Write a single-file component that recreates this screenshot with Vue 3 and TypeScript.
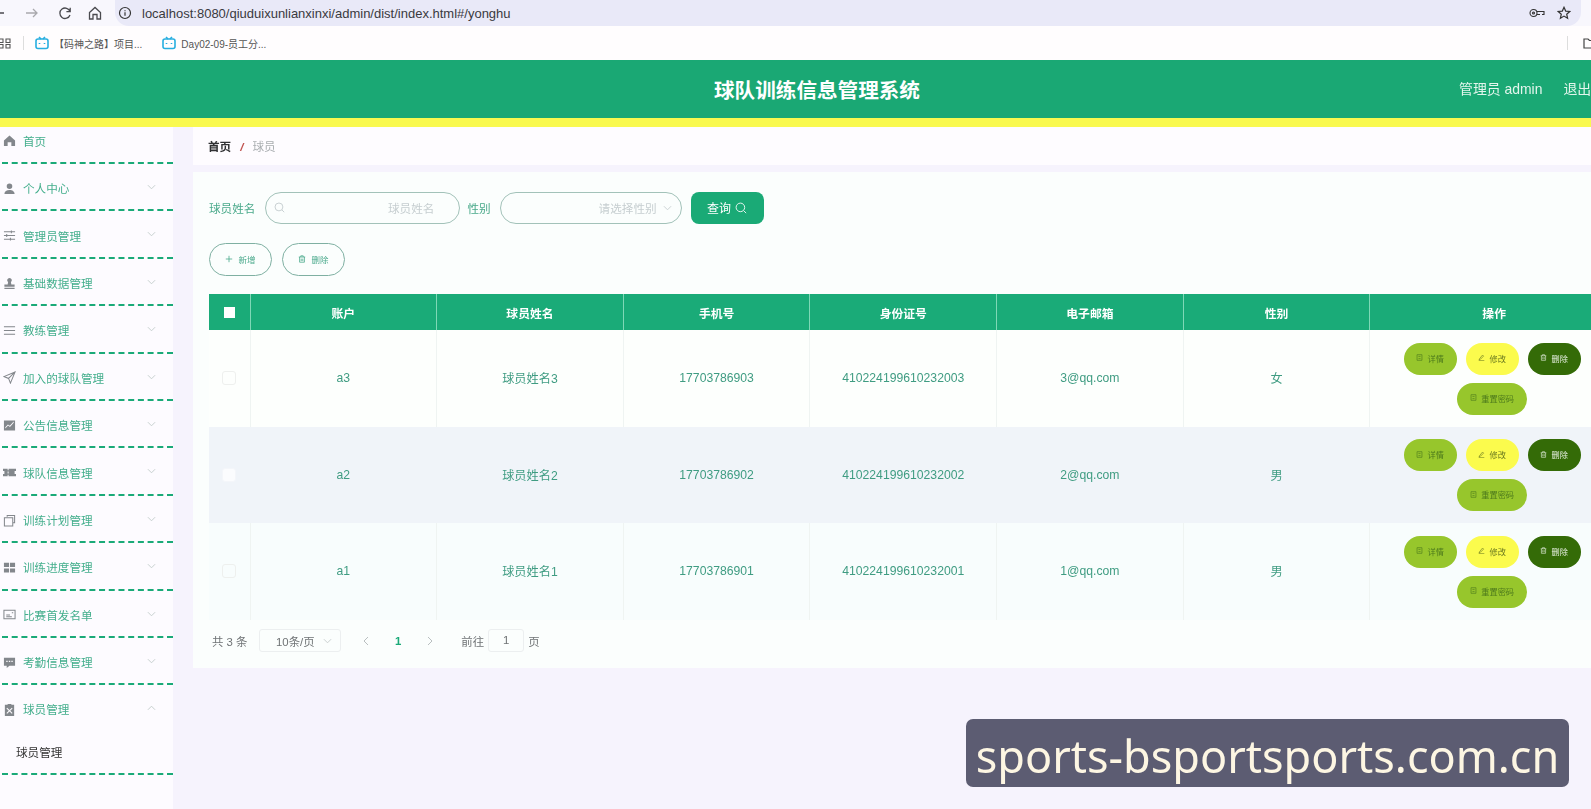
<script setup lang="ts">
interface MenuItem {
  label: string
  icon: string
  stroke?: boolean
  arrow?: boolean
}

interface Player {
  account: string
  name: string
  phone: string
  idCard: string
  email: string
  gender: string
}

const menu: MenuItem[] = [
  { label: '首页', icon: 'M1 7 7 1.500 13 7v6H9V9H5v4H1z' },
  { label: '个人中心', arrow: true, icon: 'M7 1.500a3 3 0 1 1 0 6 3 3 0 0 1 0-6zM1.500 13c0-3 2.500-4.500 5.500-4.500s5.500 1.500 5.500 4.500z' },
  { label: '管理员管理', arrow: true, stroke: true, icon: 'M1 3h12M1 7h12M1 11h12M9 1.500v3M4 5.500v3M8 9.500v3' },
  { label: '基础数据管理', arrow: true, icon: 'M7 1a2.500 2.500 0 0 1 1.500 4.500L9 8h3.500v2.500h-11V8H5l.5-2.500A2.500 2.500 0 0 1 7 1zM1.500 11.500h11V13h-11z' },
  { label: '教练管理', arrow: true, stroke: true, icon: 'M1 3h12M1 7h12M1 11h12' },
  { label: '加入的球队管理', arrow: true, stroke: true, icon: 'M13 1 1 6l5 2 2 5z M13 1 6 8' },
  { label: '公告信息管理', arrow: true, icon: 'M1 1.500h12v11H1zM2.500 10.200 5.500 7l2 1.500 4-4.500V2.800L7.300 7.300l-2-1.500-2.800 3z' },
  { label: '球队信息管理', arrow: true, icon: 'M0 3h5v1.500h1V3h8v2.500h-1.500v3H14V11H6V9.500H5V11H0V8.500h1.500v-3H0zM5 6v2h1V6z' },
  { label: '训练计划管理', arrow: true, stroke: true, icon: 'M4.500 3V1.500h8v8H11M1.500 4h9v9h-9z' },
  { label: '训练进度管理', arrow: true, icon: 'M1 2h5.500v4.500H1zM7.500 2H13v4.500H7.500zM1 8h5.500v4.500H1zM7.500 8H13v4.500H7.500z' },
  { label: '比赛首发名单', arrow: true, stroke: true, icon: 'M1 2.500h12v9H1zM3.500 7.500h4M3.500 9.500h6M9.500 5h1.500' },
  { label: '考勤信息管理', arrow: true, icon: 'M1 2h12v8.500H7L4 13v-2.500H1zM3.500 5v1.500H5V5zM6.300 5v1.500h1.500V5zM9 5v1.500h1.500V5z' },
]

const players: Player[] = [
  { account: 'a3', name: '球员姓名3', phone: '17703786903', idCard: '410224199610232003', email: '3@qq.com', gender: '女' },
  { account: 'a2', name: '球员姓名2', phone: '17703786902', idCard: '410224199610232002', email: '2@qq.com', gender: '男' },
  { account: 'a1', name: '球员姓名1', phone: '17703786901', idCard: '410224199610232001', email: '1@qq.com', gender: '男' },
]

const columns = ['账户', '球员姓名', '手机号', '身份证号', '电子邮箱', '性别', '操作']
</script>

<template>
  <div class="page">
    <div class="frame">
      <div class="omnibox-row">
        <div class="nav-icons">
          <svg class="back" viewBox="0 0 14 14"><path d="M13 7H2M6 3 2 7l4 4" /></svg>
          <svg class="forward" viewBox="0 0 14 14"><path d="M1 7h11M8 3l4 4-4 4" /></svg>
          <svg class="reload" viewBox="0 0 14 14"><path d="M12 5.500A5.200 5.200 0 1 0 12 9M12.200 1.800v3.800H8.400" /></svg>
          <svg class="home" viewBox="0 0 14 14"><path d="M1.500 6.500 7 1.500l5.500 5V13H9V8.500H5V13H1.500z" /></svg>
        </div>
        <div class="omnibox">
          <svg class="info" viewBox="0 0 14 14"><circle cx="7" cy="7" r="5.500" /><path d="M7 6.200v3.600M7 4.200v1" /></svg>
          <span class="url">localhost:8080/qiuduixunlianxinxi/admin/dist/index.html#/yonghu</span>
          <svg class="key" viewBox="0 0 16 10"><circle cx="4.500" cy="5" r="3.500" /><circle cx="4.500" cy="5" r="1" /><path d="M8 3.500h7v3h-2M8 6.500h3" /></svg>
          <svg class="star" viewBox="0 0 14 14"><path d="m7 1.300 1.700 3.800 4 .4-3 2.700.9 4L7 10.100l-3.600 2.100.9-4-3-2.700 4-.4z" /></svg>
        </div>
      </div>

      <div class="bookmarks">
        <svg class="apps" viewBox="0 0 11 11"><path d="M-1 1h4v3.500h-4zM6 1h4v3.500H6zM-1 6.500h4V10h-4zM6 6.500h4V10H6z" /></svg>
        <i class="sep"></i>
        <span class="mark first-mark">
          <svg class="bili" viewBox="0 0 14 14"><path d="M4 1l2 2M10 1 8 3" /><rect x="1" y="3" width="12" height="9.500" rx="2" /><path d="M4.500 7v1M9.500 7v1" /></svg>
          【码神之路】项目...
        </span>
        <span class="mark">
          <svg class="bili" viewBox="0 0 14 14"><path d="M4 1l2 2M10 1 8 3" /><rect x="1" y="3" width="12" height="9.500" rx="2" /><path d="M4.500 7v1M9.500 7v1" /></svg>
          Day02-09-员工分...
        </span>
        <i class="sep sep-right"></i>
        <svg class="folder" viewBox="0 0 14 12"><path d="M1 2h4l1.500 1.500H13V11H1z" /></svg>
      </div>

      <header class="topbar">
        <h1>球队训练信息管理系统</h1>
        <div class="user">
          <span>管理员 admin</span>
          <span class="logout">退出登录</span>
        </div>
      </header>

      <div class="body">
        <aside class="sidebar">
          <div v-for="(item, i) in menu" :key="item.label" class="menu-item" :class="{ 'menu-first': i === 0 }">
            <svg class="menu-icon" :class="{ outline: item.stroke }" viewBox="0 0 14 14"><path :d="item.icon" fill-rule="evenodd" /></svg>
            <span>{{ item.label }}</span>
            <svg v-if="item.arrow" class="chevron" viewBox="0 0 10 6"><path d="m1 1 4 4 4-4" /></svg>
          </div>
          <div class="menu-open">
            <div class="menu-head">
              <svg class="menu-icon" viewBox="0 0 14 14"><path d="M2 2h3V1h4v1h3v12H2zM4.500 5 7 7.500 9.500 5l.8.800L7.800 8.300l2.500 2.500-.8.800L7 9.100l-2.500 2.500-.8-.8 2.500-2.500-2.500-2.500z" fill-rule="evenodd" /></svg>
              <span>球员管理</span>
              <svg class="chevron" viewBox="0 0 10 6"><path d="m1 5 4-4 4 4" /></svg>
            </div>
            <div class="submenu">球员管理</div>
          </div>
        </aside>

        <main class="main">
          <nav class="crumbs">
            <b>首页</b>
            <i>/</i>
            <span>球员</span>
          </nav>

          <section class="card">
            <form class="search" @submit.prevent>
              <label>球员姓名</label>
              <div class="pill-input name-input">
                <svg class="glass" viewBox="0 0 14 14"><circle cx="6.300" cy="6.300" r="5" /><path d="m10 10 3 3" /></svg>
                <span>球员姓名</span>
              </div>
              <label>性别</label>
              <div class="pill-input gender-input">
                <span>请选择性别</span>
                <svg class="caret" viewBox="0 0 10 6"><path d="m1 1 4 4 4-4" /></svg>
              </div>
              <button class="query" type="button">
                查询
                <svg viewBox="0 0 14 14"><circle cx="6.300" cy="6.300" r="5" /><path d="m10 10 3 3" /></svg>
              </button>
            </form>

            <div class="tools">
              <button type="button">
                <svg viewBox="0 0 10 10"><path d="M5 1v8M1 5h8" /></svg>
                新增
              </button>
              <button type="button">
                <svg viewBox="0 0 10 10"><path d="M1 2.500h8M3.500 2.500V1h3v1.500M2 2.500V9h6V2.500M4 4.500v3M6 4.500v3" /></svg>
                删除
              </button>
            </div>

            <table>
              <colgroup>
                <col class="col-check" />
                <col v-for="c in 6" :key="c" class="col-data" />
                <col class="col-ops" />
              </colgroup>
              <thead>
                <tr>
                  <th><i class="check-all"></i></th>
                  <th v-for="c in columns" :key="c">{{ c }}</th>
                </tr>
              </thead>
              <tbody>
                <tr v-for="p in players" :key="p.account">
                  <td><i class="check"></i></td>
                  <td>{{ p.account }}</td>
                  <td>{{ p.name }}</td>
                  <td>{{ p.phone }}</td>
                  <td>{{ p.idCard }}</td>
                  <td>{{ p.email }}</td>
                  <td>{{ p.gender }}</td>
                  <td>
                    <div class="ops">
                      <button class="lime" type="button">
                        <svg viewBox="0 0 10 10"><path d="M1.500 1h7v8h-7zM3.500 3.500h3M3.500 6.500h3" /></svg>
                        详情
                      </button>
                      <button class="yellow" type="button">
                        <svg viewBox="0 0 10 10"><path d="M6.500 1.500 8 3 3.500 7.500 1.500 8.500l.8-2zM1 9.500h8" /></svg>
                        修改
                      </button>
                      <button class="dark" type="button">
                        <svg viewBox="0 0 10 10"><path d="M1 2.500h8M3.500 2.500V1h3v1.500M2 2.500V9h6V2.500M4 4.500v3M6 4.500v3" /></svg>
                        删除
                      </button>
                      <button class="lime wide" type="button">
                        <svg viewBox="0 0 10 10"><path d="M1.500 1h7v8h-7zM3.500 3.500h3M3.500 6.500h3" /></svg>
                        重置密码
                      </button>
                    </div>
                  </td>
                </tr>
              </tbody>
            </table>

            <div class="pager">
              <span class="total">共 3 条</span>
              <div class="size">
                <span>10条/页</span>
                <svg viewBox="0 0 10 6"><path d="m1 1 4 4 4-4" /></svg>
              </div>
              <svg class="turn" viewBox="0 0 6 10"><path d="M5 1 1 5l4 4" /></svg>
              <b>1</b>
              <svg class="turn" viewBox="0 0 6 10"><path d="m1 1 4 4-4 4" /></svg>
              <span class="goto">前往</span>
              <span class="jump">1</span>
              <span>页</span>
            </div>
          </section>
        </main>
      </div>
    </div>

    <div class="watermark">sports-bsportsports.com.cn</div>
  </div>
</template>

<style>
html,
body {
  margin: 0;
  width: 1591px;
  height: 809px;
  overflow: hidden;
  background: #f6f3fd;
}
</style>

<style scoped>
.page {
  width: 1591px;
  height: 809px;
  position: relative;
  overflow: hidden;
  font-family: "Liberation Sans", "Noto Sans CJK SC", sans-serif;
  background: #f6f3fd;
}

/* the source is a soft video frame */
.frame {
  width: 1634px;
  filter: blur(.4px);
}

svg {
  fill: none;
  stroke: currentColor;
  flex: none;
}

/* browser chrome */
.omnibox-row {
  height: 26px;
  width: 1591px;
  display: flex;
  background: #f8f7fd;
}

.nav-icons {
  width: 115px;
  display: flex;
  align-items: center;
  flex: none;
}

.nav-icons svg {
  width: 14px;
  height: 14px;
  stroke-width: 1.3;
  color: #4a4a4f;
}

.back {
  margin-left: -9px;
}

.nav-icons .forward {
  margin-left: 20px;
  color: #a9a9ad;
}

.reload {
  margin-left: 19px;
}

.home {
  margin-left: 16px;
}

.omnibox {
  width: 1466px;
  display: flex;
  align-items: center;
  background: #e9e9f8;
  border-radius: 0 0 14px 14px;
  padding-left: 3px;
  box-sizing: border-box;
  color: #333;
}

.info {
  width: 14px;
  height: 14px;
  stroke-width: 1.2;
}

.url {
  margin-left: 10px;
  font-size: 13px;
  color: #3a3a3e;
}

.key {
  width: 16px;
  height: 10px;
  margin-left: auto;
  stroke-width: 1.1;
}

.star {
  width: 14px;
  height: 14px;
  margin: 0 10px 0 12px;
  stroke-width: 1.2;
}

.bookmarks {
  height: 34px;
  width: 1591px;
  display: flex;
  align-items: center;
  background: #fffdfe;
  font-size: 10px;
  color: #555;
  position: relative;
}

.apps {
  width: 11px;
  height: 11px;
  stroke-width: 1.1;
  color: #555;
}

.sep {
  width: 1px;
  height: 14px;
  background: #ddd;
  margin-left: 12px;
}

.mark {
  display: flex;
  align-items: center;
  gap: 5px;
  margin-left: 20px;
}

.first-mark {
  margin-left: 11px;
}

.bili {
  width: 14px;
  height: 14px;
  stroke-width: 1.6;
  color: #27aee0;
}

.sep-right {
  margin-left: auto;
}

.folder {
  width: 14px;
  height: 12px;
  margin: 0 -6px 0 15px;
  stroke-width: 1.2;
  color: #444;
}

/* header */
.topbar {
  height: 58px;
  background: #1aa874;
  border-bottom: 9px solid #f9f94f;
  display: flex;
  align-items: center;
  justify-content: center;
  position: relative;
  color: #fff;
}

.topbar h1 {
  margin: 0;
  font-size: 20.6px;
  font-weight: 700;
}

.user {
  position: absolute;
  left: 1459px;
  top: 18px;
  display: flex;
  gap: 21px;
  font-size: 13.9px;
  color: #e2f5ec;
  white-space: nowrap;
}

/* layout */
.body {
  display: flex;
  height: 682px;
}

.sidebar {
  width: 173px;
  flex: none;
  background: #fdfbff;
  font-size: 11.6px;
  color: #43ae8c;
}

.menu-item,
.menu-head {
  height: 47.42px;
  box-sizing: border-box;
  margin-left: 2px;
  padding-top: 3px;
  display: flex;
  align-items: center;
  position: relative;
  border-bottom: 2px dashed #1aaa78;
}

.menu-item.menu-first {
  height: 37px;
  padding: 0 0 8px;
}

.menu-head {
  border-bottom: 0;
  padding-top: 0;
}

.menu-icon {
  width: 13px;
  height: 13px;
  margin: 0 7px 0 1px;
  fill: #83878c;
  stroke: none;
}

.menu-icon.outline {
  fill: none;
  stroke: #83878c;
  stroke-width: 1.1;
}

.chevron {
  position: absolute;
  left: 145px;
  top: 20px;
  width: 9px;
  height: 6px;
  color: #c2cbc9;
  stroke-width: 1;
}

.submenu {
  height: 42px;
  box-sizing: border-box;
  margin-left: 2px;
  padding: 11px 0 0 14px;
  font-size: 11.6px;
  color: #333;
  border-bottom: 2px dashed #1aaa78;
}

.main {
  flex: 1;
  min-width: 0;
  padding-left: 20px;
}

.crumbs {
  height: 38px;
  display: flex;
  align-items: center;
  padding-left: 15px;
  gap: 9px;
  font-size: 11.6px;
  background: #fefcff;
  color: #a9adb0;
}

.crumbs b {
  color: #303133;
}

.crumbs i {
  color: #c0524e;
  font-weight: 700;
}

.card {
  margin-top: 7px;
  height: 496px;
  box-sizing: border-box;
  padding: 20px 16px 0;
  background: #fbfefd;
}

/* search */
.search {
  display: flex;
  align-items: center;
  height: 32px;
  font-size: 11.6px;
  color: #49a98a;
}

.pill-input {
  height: 32px;
  box-sizing: border-box;
  border: 1.5px solid #a2c2b9;
  border-radius: 16px;
  display: flex;
  align-items: center;
  justify-content: flex-end;
  color: #c6ced0;
  position: relative;
}

.name-input {
  width: 195px;
  margin: 0 7px 0 10px;
  padding-right: 25px;
}

.gender-input {
  width: 182px;
  margin: 0 9px 0 9px;
  padding-right: 9px;
}

.glass {
  position: absolute;
  left: 8px;
  top: 9px;
  width: 11px;
  height: 11px;
  stroke-width: 1.2;
}

.caret {
  width: 9px;
  height: 6px;
  margin-left: 6px;
}

.query {
  width: 73px;
  height: 32px;
  border: 0;
  border-radius: 8px;
  background: #1aaa76;
  color: #fff;
  font: inherit;
  font-size: 12px;
  padding-bottom: 2px;
  display: flex;
  align-items: center;
  justify-content: center;
  gap: 4px;
}

.query svg {
  width: 12px;
  height: 12px;
}

.tools {
  display: flex;
  gap: 10px;
  margin-top: 19px;
}

.tools button {
  width: 63px;
  height: 33px;
  border: 1px solid #7fb0a2;
  border-radius: 17px;
  background: transparent;
  color: #4aa98c;
  font: inherit;
  font-size: 8.5px;
  padding-bottom: 3px;
  display: flex;
  align-items: center;
  justify-content: center;
  gap: 5px;
}

.tools svg {
  width: 8px;
  height: 8px;
  stroke-width: 1;
}

/* table */
table {
  margin-top: 18px;
  width: 1409px;
  table-layout: fixed;
  border-collapse: collapse;
  font-size: 12.2px;
  color: #3f9c82;
}

.col-check {
  width: 41px;
}

.col-data {
  width: 186.6px;
}

.col-ops {
  width: 248px;
}

th {
  height: 36px;
  padding: 0;
  background: #1aab78;
  color: #fff;
  font-size: 11.8px;
  font-weight: 700;
  border-right: 1px solid #7fd8b6;
}

th:last-child {
  border-right: 0;
}

td {
  height: 96.5px;
  padding: 0;
  text-align: center;
  border-right: 1px solid #eff4f2;
}

td:last-child {
  border-right: 0;
}

tbody tr:nth-child(1) {
  background: #fdfffd;
}

tbody tr:nth-child(2) {
  background: #f0f4f9;
}

tbody tr:nth-child(2) td {
  border-right-color: #f0f4f9;
}

tbody tr:nth-child(3) {
  background: #f8fdfd;
}

.check-all {
  display: block;
  width: 11px;
  height: 11px;
  margin: 0 auto;
  background: #fff;
}

.check {
  display: block;
  width: 12px;
  height: 12px;
  margin: 0 auto;
  border: 1px solid #eef0ee;
  border-radius: 3px;
}

tbody tr:nth-child(2) .check {
  background: #fbfcfe;
  border-color: #f4f6fa;
}

.ops {
  display: flex;
  flex-wrap: wrap;
  justify-content: center;
  gap: 8px 9px;
  padding: 1px 4px 0 0;
}

.ops button {
  width: 53px;
  height: 32px;
  border: 0;
  border-radius: 16px;
  font: inherit;
  font-size: 8.2px;
  padding-bottom: 3px;
  display: flex;
  align-items: center;
  justify-content: center;
  gap: 4px;
}

.ops svg {
  width: 7px;
  height: 7px;
  stroke-width: .9;
}

.ops .wide {
  width: 70px;
}

.lime {
  background: #97c62c;
  color: #4d7a1c;
}

.yellow {
  background: #fbfb4d;
  color: #6b7a20;
}

.dark {
  background: #346b07;
  color: #e6efe0;
}

/* pager */
.pager {
  display: flex;
  align-items: center;
  height: 24px;
  margin-top: 9px;
  padding-left: 3px;
  font-size: 11.4px;
  color: #6f7375;
}

.total {
  width: 47px;
}

.size {
  width: 82px;
  height: 23px;
  box-sizing: border-box;
  border: 1px solid #eceff0;
  border-radius: 3px;
  display: flex;
  align-items: center;
  justify-content: space-between;
  padding: 0 8px 0 16px;
  margin-right: 22px;
}

.size svg {
  width: 9px;
  height: 6px;
  color: #c4cbcc;
}

.turn {
  width: 6px;
  height: 10px;
  color: #b9bfc0;
}

.pager b {
  margin: 0 26px;
  color: #1aaa78;
}

.goto {
  margin-left: 28px;
}

.jump {
  width: 36px;
  height: 23px;
  box-sizing: border-box;
  border: 1px solid #eceff0;
  border-radius: 3px;
  margin: 0 4px 0 4px;
  text-align: center;
  line-height: 21px;
}

.watermark {
  position: absolute;
  left: 966px;
  top: 719px;
  width: 603px;
  height: 68px;
  border-radius: 7px;
  background: #5c5c72;
  color: #fdf6e3;
  font-family: "Noto Sans", sans-serif;
  font-size: 45px;
  line-height: 73px;
  text-align: center;
  white-space: nowrap;
}
</style>
